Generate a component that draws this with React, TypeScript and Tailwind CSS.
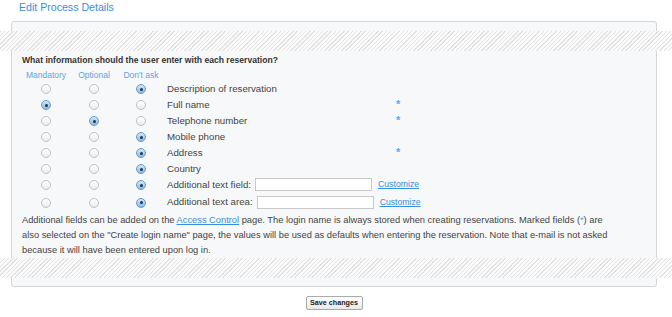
import React from "react";

const rows: { label: string; sel: number; star?: boolean; input?: boolean }[] = [
  { label: "Description of reservation", sel: 2 },
  { label: "Full name", sel: 0, star: true },
  { label: "Telephone number", sel: 1, star: true },
  { label: "Mobile phone", sel: 2 },
  { label: "Address", sel: 2, star: true },
  { label: "Country", sel: 2 },
  { label: "Additional text field:", sel: 2, input: true },
  { label: "Additional text area:", sel: 2, input: true },
];

function Radio({ on }: { on: boolean }) {
  return on ? (
    <span className="flex h-[10px] w-[10px] items-center justify-center rounded-full border border-[#6b98c4] bg-[linear-gradient(180deg,#d3e7f8,#86bbe8)]">
      <span className="h-[3px] w-[3px] rounded-full bg-[#1f3550]" />
    </span>
  ) : (
    <span className="block h-[10px] w-[10px] rounded-full border border-[#c2c2c2] bg-[linear-gradient(180deg,#ffffff,#ebebeb)]" />
  );
}

const band =
  "h-[20px] -ml-[12px] -mr-[16px] bg-[repeating-linear-gradient(135deg,#e3e3e3_0px,#e3e3e3_1px,#fbfbfb_1px,#fbfbfb_3px)]";

export default function App() {
  return (
    <div className="w-[672px] h-[317px] bg-white font-['Liberation_Sans',Arial,sans-serif] text-[#444]">
      <div className="ml-[19px] h-[14px] leading-[14px] text-[10.6px] text-[#3a8ed6]">Edit Process Details</div>
      <div className="ml-[11px] mt-[7px] w-[646px] rounded-[3px] border border-[#d6d6d6] bg-[#f7f8fa] pt-[9px] pb-[8px]">
        <div className={band} />
        <div className="px-[10px]">
          <div className="mt-[4px] leading-[10px] text-[8.6px] font-bold text-[#333]">
            What information should the user enter with each reservation?
          </div>
          <div className="mt-[4px] flex h-[12px] items-center text-[8.5px] text-[#5fa5df]">
            <div className="w-[48px] text-center">Mandatory</div>
            <div className="w-[48px] text-center">Optional</div>
            <div className="w-[46px] text-center">Don't ask</div>
          </div>
          {rows.map((r, i) => (
            <div key={i} className={`flex items-center ${i === 7 ? "h-[19px]" : "h-[16px]"}`}>
              {[0, 1, 2].map((c) => (
                <div key={c} className={`${c === 2 ? "w-[46px]" : "w-[48px]"} flex justify-center`}>
                  <Radio on={r.sel === c} />
                </div>
              ))}
              <div className="flex items-center pl-[3px] text-[9.7px] text-[#444]">
                {r.input ? (
                  <>
                    <span>{r.label}</span>
                    <span className="ml-[4px] h-[13px] w-[117px] border border-[#c9c9c9] bg-white" />
                    <a className="ml-[6px] text-[8.7px] text-[#3a8ed6] underline">Customize</a>
                  </>
                ) : (
                  <>
                    <span className="w-[229px]">{r.label}</span>
                    {r.star && <span className="-mt-[2px] text-[11px] font-bold text-[#5fa5df]">*</span>}
                  </>
                )}
              </div>
            </div>
          ))}
          <p className="mt-[1px] text-[9.3px] leading-[15px] text-[#444]">
            Additional fields can be added on the{" "}
            <a className="text-[#3a8ed6] underline">Access Control</a> page. The login name is always stored when
            creating reservations. Marked fields (<span className="text-[#5fa5df]">*</span>) are
            <br />
            also selected on the "Create login name" page, the values will be used as defaults when entering the
            reservation. Note that e-mail is not asked
            <br />
            because it will have been entered upon log in.
          </p>
        </div>
        <div className={band} />
      </div>
      <div className="ml-[11px] mt-[9px] flex w-[646px] justify-center">
        <button className="h-[14px] w-[57px] rounded-[2px] border border-[#aaa] bg-[linear-gradient(180deg,#ffffff,#e9e9e9)] text-[7.2px] font-bold leading-[12px] text-[#222]">
          Save changes
        </button>
      </div>
    </div>
  );
}
